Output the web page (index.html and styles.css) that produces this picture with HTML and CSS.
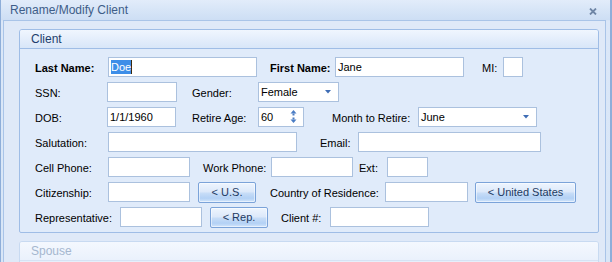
FILE: index.html
```html
<!DOCTYPE html>
<html lang="en">
<head>
    <meta charset="UTF-8">
    <title>Rename/Modify Client</title>
    <link rel="stylesheet" href="styles.css">
</head>
<body>
    <div class="window">
        <header class="titlebar">
            <span class="title">Rename/Modify Client</span>
            <svg class="close" width="8" height="7" viewBox="0 0 8 7">
                <path d="M1 0.5 L7 6.5 M7 0.5 L1 6.5" stroke="#6f86a6" stroke-width="1.8"/>
            </svg>
        </header>

        <div class="client-area">
            <section class="group">
                <div class="group-header">Client</div>
                <div class="group-body">
                    <div class="row">
                        <label class="lbl bold w73">Last Name:</label>
                        <div class="field w149"><span class="selected">Doe</span></div>
                        <label class="lbl bold ml13 w65">First Name:</label>
                        <div class="field w129">Jane</div>
                        <label class="lbl ml18 w21">MI:</label>
                        <div class="field w20"></div>
                    </div>

                    <div class="row">
                        <label class="lbl w72">SSN:</label>
                        <div class="field w70"></div>
                        <label class="lbl ml15 w66">Gender:</label>
                        <div class="field combo w81">Female
                            <svg class="arrow" width="6" height="4" viewBox="0 0 6 4"><path d="M0 0 H6 L3 3.5 Z" fill="#3f6db5"/></svg>
                        </div>
                    </div>

                    <div class="row">
                        <label class="lbl w72">DOB:</label>
                        <div class="field w69">1/1/1960</div>
                        <label class="lbl ml16 w66">Retire Age:</label>
                        <div class="field combo w46">60
                            <svg class="spin" width="7" height="13" viewBox="0 0 7 13">
                                <path d="M3.5 0 L6.5 3.5 H0.5 Z" fill="#4a7cc4"/>
                                <rect x="2.5" y="3.5" width="2" height="2" fill="#4a7cc4"/>
                                <rect x="2.5" y="7.5" width="2" height="2" fill="#4a7cc4"/>
                                <path d="M0.5 9.5 H6.5 L3.5 13 Z" fill="#4a7cc4"/>
                            </svg>
                        </div>
                        <label class="lbl ml28 w86">Month to Retire:</label>
                        <div class="field combo w119">June
                            <svg class="arrow" width="6" height="4" viewBox="0 0 6 4"><path d="M0 0 H6 L3 3.5 Z" fill="#3f6db5"/></svg>
                        </div>
                    </div>

                    <div class="row">
                        <label class="lbl w73">Salutation:</label>
                        <div class="field w189"></div>
                        <label class="lbl ml23 w38">Email:</label>
                        <div class="field w183"></div>
                    </div>

                    <div class="row">
                        <label class="lbl w73">Cell Phone:</label>
                        <div class="field w82"></div>
                        <label class="lbl ml13 w68">Work Phone:</label>
                        <div class="field w82"></div>
                        <label class="lbl ml6 w28">Ext:</label>
                        <div class="field w41"></div>
                    </div>

                    <div class="row">
                        <label class="lbl w73">Citizenship:</label>
                        <div class="field w82"></div>
                        <button class="btn ml8 w58">&lt; U.S.</button>
                        <label class="lbl ml14 w115">Country of Residence:</label>
                        <div class="field w83"></div>
                        <button class="btn ml7 w101">&lt; United States</button>
                    </div>

                    <div class="row">
                        <label class="lbl w85">Representative:</label>
                        <div class="field w82"></div>
                        <button class="btn ml8 w58">&lt; Rep.</button>
                        <label class="lbl ml13 w49">Client #:</label>
                        <div class="field w99"></div>
                    </div>
                </div>
            </section>

            <section class="group group-disabled">
                <div class="group-header">Spouse</div>
                <div class="group-body"></div>
            </section>
        </div>
    </div>
</body>
</html>
```

FILE: styles.css
```css
:root {
    --frame: #c4d8f2;
    --window-bg: #dfe9f8;
    --group-border: #9fbde6;
    --field-border: #abc1de;
    --label: #000000;
    --title: #3e5d88;
}

* {
    margin: 0;
    padding: 0;
    box-sizing: border-box;
}

body {
    width: 612px;
    height: 262px;
    overflow: hidden;
    font-family: "Liberation Sans", Arial, sans-serif;
    font-size: 11px;
    color: var(--label);
    background: var(--frame);
}

.window {
    height: 262px;
    display: flex;
    flex-direction: column;
    border-left: 1px solid #8eaed9;
    border-right: 2px solid #8eaed9;
    background: linear-gradient(180deg, #dbe7f8 0px, #d3e2f5 20px, #dbe7f8 21px, #d8e6f7 262px);
}

.titlebar {
    flex: none;
    height: 20px;
    display: flex;
    align-items: center;
    justify-content: space-between;
    padding: 0 13px 0 9px;
    background: linear-gradient(180deg, #e2ecfa 0%, #d7e5f7 50%, #cddef4 100%);
}

.title {
    font-size: 12px;
    color: var(--title);
    padding-bottom: 1px;
}

.close {
    display: block;
    margin-top: 2px;
}

.client-area {
    flex: 1;
    min-height: 0;
    overflow: hidden;
    margin: 0 4px 0 2px;
    border: 1px solid #a9c4e8;
    border-bottom: none;
    background: var(--window-bg);
    padding: 8px 0 0 15px;
}

.group {
    width: 580px;
    border: 1px solid var(--group-border);
    border-radius: 3px 3px 2px 2px;
    background: #e0ebfa;
}

.group-header {
    height: 19px;
    padding: 2px 0 0 11px;
    font-size: 12px;
    color: #1e3e6c;
    border-bottom: 1px solid var(--group-border);
    background: linear-gradient(180deg, #f0f6fe 0%, #e3edfb 55%, #d8e6f8 100%);
    border-radius: 2px 2px 0 0;
}

.group-body {
    display: flex;
    flex-direction: column;
    gap: 5px;
    padding: 8px 0 5px 15px;
}

.group-disabled {
    margin-top: 8px;
    border-color: #c8daf1;
    background: #e6effb;
}

.group-disabled .group-header {
    color: #a5b7cf;
    border-bottom-color: #d6e3f4;
    background: linear-gradient(180deg, #f4f8fe 0%, #eaf1fc 100%);
}

.row {
    height: 20px;
    display: flex;
    align-items: center;
}

.lbl {
    flex: none;
    padding-top: 2px;
    white-space: nowrap;
}

.bold {
    font-weight: bold;
}

.field {
    flex: none;
    height: 20px;
    position: relative;
    display: flex;
    align-items: center;
    padding: 0 0 0 2px;
    background: #ffffff;
    border: 1px solid var(--field-border);
    font-size: 11px;
    white-space: nowrap;
}

.selected {
    background: #3d8ee8;
    color: #ffffff;
    padding: 1px 0;
    border-right: 1px solid #3a2a10;
}

.arrow {
    position: absolute;
    right: 7px;
    top: 7px;
}

.spin {
    position: absolute;
    right: 6px;
    top: 2px;
}

.btn {
    flex: none;
    height: 21px;
    font-family: inherit;
    font-size: 11px;
    color: #1d3a62;
    border: 1px solid #7ba3d9;
    border-radius: 2px;
    background: linear-gradient(180deg, #eef5fe 0%, #dde9fa 45%, #c6dcf7 55%, #b3d1f5 80%, #d2e5fb 100%);
    box-shadow: inset 0 0 0 1px rgba(255, 255, 255, 0.5);
}

.ml6 { margin-left: 6px; }
.ml7 { margin-left: 7px; }
.ml8 { margin-left: 8px; }
.ml13 { margin-left: 13px; }
.ml14 { margin-left: 14px; }
.ml15 { margin-left: 15px; }
.ml16 { margin-left: 16px; }
.ml18 { margin-left: 18px; }
.ml23 { margin-left: 23px; }
.ml28 { margin-left: 28px; }

.w20 { width: 20px; }
.w21 { width: 21px; }
.w28 { width: 28px; }
.w38 { width: 38px; }
.w41 { width: 41px; }
.w46 { width: 46px; }
.w49 { width: 49px; }
.w58 { width: 58px; }
.w65 { width: 65px; }
.w66 { width: 66px; }
.w68 { width: 68px; }
.w69 { width: 69px; }
.w70 { width: 70px; }
.w72 { width: 72px; }
.w73 { width: 73px; }
.w81 { width: 81px; }
.w82 { width: 82px; }
.w83 { width: 83px; }
.w85 { width: 85px; }
.w86 { width: 86px; }
.w99 { width: 99px; }
.w101 { width: 101px; }
.w115 { width: 115px; }
.w119 { width: 119px; }
.w129 { width: 129px; }
.w149 { width: 149px; }
.w183 { width: 183px; }
.w189 { width: 189px; }
```
